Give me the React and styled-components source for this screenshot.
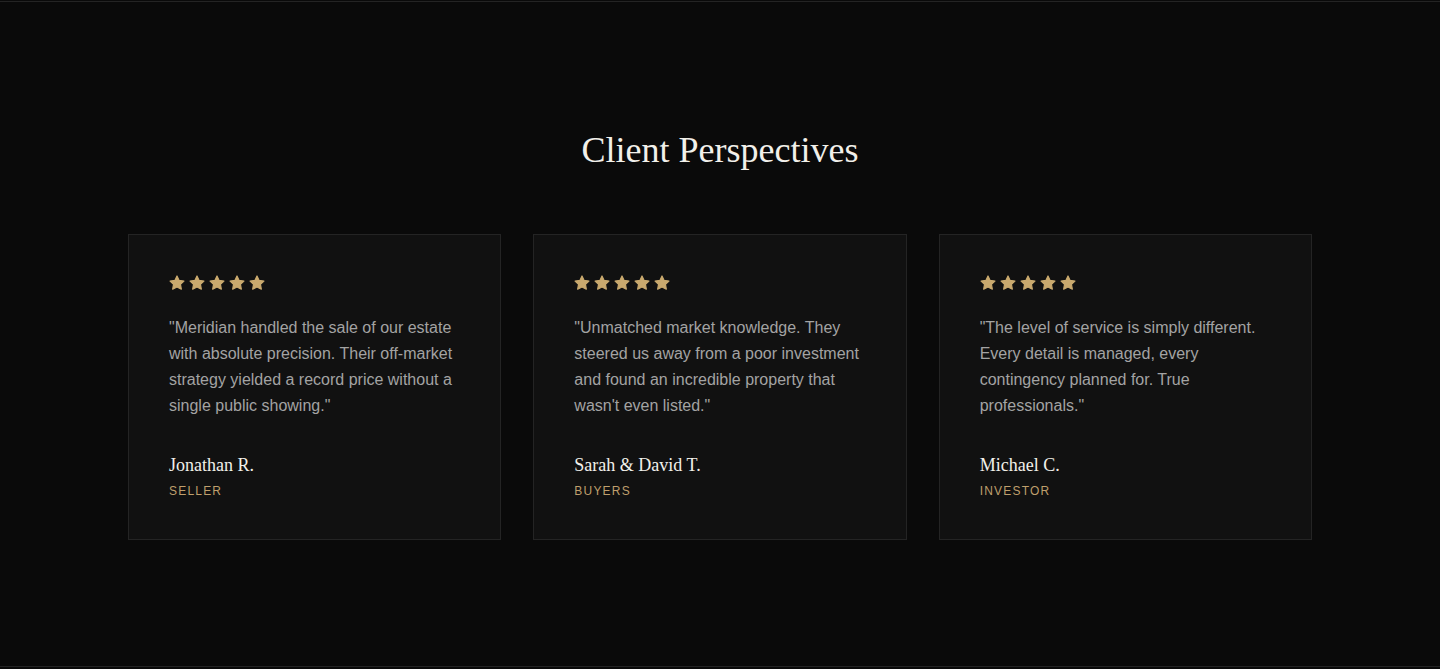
// Libraries
import React from "react";
import styled, { createGlobalStyle } from "styled-components";

const GlobalStyle = createGlobalStyle`
  html, body {
    margin: 0;
    padding: 0;
    background: #0a0a0a;
  }
  body {
    font-family: "Liberation Sans", Arial, sans-serif;
    padding-top: 1px;
  }
`;

const Section = styled.section`
  border-top: 1px solid #242424;
  border-bottom: 1px solid #242424;
  background: #0a0a0a;
  padding: 127px 0 0;
  height: 666px;
  box-sizing: border-box;
`;

const Title = styled.h2`
  margin: 0 0 62px;
  text-align: center;
  font-family: "Liberation Serif", "Times New Roman", serif;
  font-weight: 400;
  font-size: 36px;
  line-height: 1.2;
  color: #f2f0ea;
`;

const Grid = styled.div`
  display: grid;
  grid-template-columns: repeat(3, 1fr);
  gap: 32px;
  width: 1184px;
  margin: 0 auto;
`;

const Card = styled.article`
  background: #111111;
  border: 1px solid #242424;
  padding: 40px;
  height: 306px;
  box-sizing: border-box;
  display: flex;
  flex-direction: column;
`;

const Stars = styled.div`
  display: flex;
  gap: 4px;
  height: 16px;
  align-items: center;
`;

const Quote = styled.p`
  margin: 24px 0 0;
  font-size: 16px;
  line-height: 26px;
  color: #a3a3a3;
`;

const Name = styled.div`
  margin-top: auto;
  font-family: "Liberation Serif", "Times New Roman", serif;
  font-size: 18px;
  line-height: 26px;
  color: #f2f0ea;
`;

const Role = styled.div`
  margin-top: 5px;
  font-size: 12px;
  line-height: 16px;
  letter-spacing: 1.2px;
  text-transform: uppercase;
  color: #bf9f6c;
`;

function Star() {
  return (
    <svg width="16" height="16" viewBox="0 0 24 24">
      <path
        d="M12 1.5l3.2 6.6 7.2 1-5.2 5 1.3 7.2L12 17.9l-6.5 3.4 1.3-7.2-5.2-5 7.2-1z"
        fill="#c9a96e"
        stroke="#c9a96e"
        strokeWidth="1.8"
        strokeLinejoin="round"
      />
    </svg>
  );
}

const reviews = [
  {
    quote:
      "\"Meridian handled the sale of our estate with absolute precision. Their off-market strategy yielded a record price without a single public showing.\"",
    name: "Jonathan R.",
    role: "Seller",
  },
  {
    quote:
      "\"Unmatched market knowledge. They steered us away from a poor investment and found an incredible property that wasn't even listed.\"",
    name: "Sarah & David T.",
    role: "Buyers",
  },
  {
    quote:
      "\"The level of service is simply different. Every detail is managed, every contingency planned for. True professionals.\"",
    name: "Michael C.",
    role: "Investor",
  },
];

export default function App() {
  return (
    <>
      <GlobalStyle />
      <Section>
        <Title>Client Perspectives</Title>
        <Grid>
          {reviews.map((r) => (
            <Card key={r.name}>
              {/* Rating */}
              <Stars>
                {[0, 1, 2, 3, 4].map((i) => (
                  <Star key={i} />
                ))}
              </Stars>
              <Quote>{r.quote}</Quote>
              <Name>{r.name}</Name>
              <Role>{r.role}</Role>
            </Card>
          ))}
        </Grid>
      </Section>
    </>
  );
}
